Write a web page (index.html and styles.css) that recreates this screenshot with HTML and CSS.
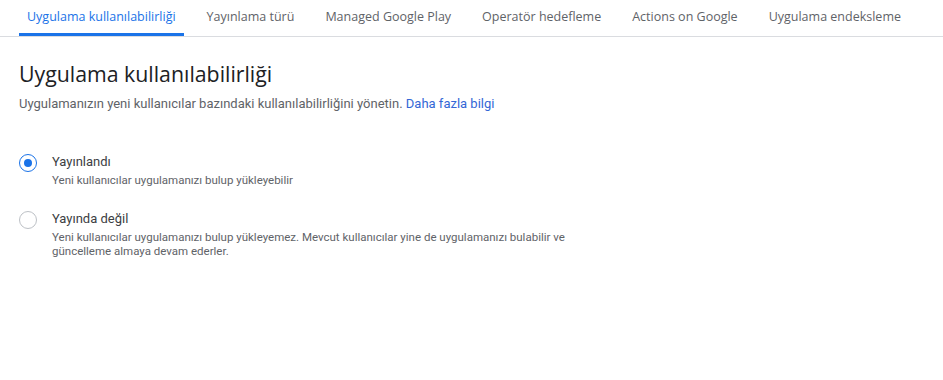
FILE: index.html
```html
<!DOCTYPE html>
<html lang="tr">

<head>
    <meta charset="UTF-8">
    <meta name="viewport" content="width=device-width, initial-scale=1.0">
    <title>Uygulama kullanılabilirliği</title>
    <link rel="stylesheet" href="styles.css">
</head>

<body>
    <nav class="tabs">
        <a href="#" class="tab active">Uygulama kullanılabilirliği</a>
        <a href="#" class="tab">Yayınlama türü</a>
        <a href="#" class="tab">Managed Google Play</a>
        <a href="#" class="tab">Operatör hedefleme</a>
        <a href="#" class="tab">Actions on Google</a>
        <a href="#" class="tab">Uygulama endeksleme</a>
    </nav>

    <section class="content">
        <h1>Uygulama kullanılabilirliği</h1>
        <p class="subtitle">
            Uygulamanızın yeni kullanıcılar bazındaki kullanılabilirliğini yönetin.
            <a href="#">Daha fazla bilgi</a>
        </p>

        <div class="options">
            <label class="option">
                <input type="radio" name="availability" checked>
                <span class="radio"></span>
                <span class="option-text">
                    <span class="option-title">Yayınlandı</span>
                    <span class="option-desc">Yeni kullanıcılar uygulamanızı bulup yükleyebilir</span>
                </span>
            </label>
            <label class="option">
                <input type="radio" name="availability">
                <span class="radio"></span>
                <span class="option-text">
                    <span class="option-title">Yayında değil</span>
                    <span class="option-desc">Yeni kullanıcılar uygulamanızı bulup yükleyemez. Mevcut kullanıcılar yine de uygulamanızı bulabilir ve güncelleme almaya devam ederler.</span>
                </span>
            </label>
        </div>
    </section>
</body>

</html>
```

FILE: styles.css
```css
body {
    font-family: Roboto, sans-serif;
    margin: 0;
    color: #202124;
    background: #fff;
}

.tabs {
    display: flex;
    gap: 15px;
    padding: 0 19px;
    border-bottom: 1px solid #dadce0;
}

.tab {
    font-family: "Open Sans", sans-serif;
    font-size: 12.5px;
    color: #5f6368;
    text-decoration: none;
    padding: 8px 8px 0;
    height: 25px;
    border-bottom: 3px solid transparent;
    border-radius: 3px 3px 0 0;
    white-space: nowrap;
}

.tab.active {
    color: #1a73e8;
    border-bottom-color: #1a73e8;
}

.content {
    padding: 0 19px;
}

h1 {
    font-family: "Open Sans", sans-serif;
    font-weight: 400;
    font-size: 21.3px;
    margin: 22px 0 8px;
}

.subtitle {
    font-size: 13px;
    color: #5f6368;
    margin: 0;
}

.subtitle a {
    color: #3367d6;
    text-decoration: none;
}

.options {
    margin-top: 42px;
    display: flex;
    flex-direction: column;
    gap: 23px;
}

.option {
    display: flex;
    align-items: flex-start;
    gap: 15px;
    cursor: pointer;
}

.option input {
    display: none;
}

.radio {
    width: 16px;
    height: 16px;
    margin-top: 1px;
    border: 1.5px solid #bdc1c6;
    border-radius: 50%;
    flex-shrink: 0;
    display: flex;
    align-items: center;
    justify-content: center;
}

.option input:checked + .radio {
    border-color: #1a73e8;
}

.option input:checked + .radio::after {
    content: "";
    width: 8px;
    height: 8px;
    border-radius: 50%;
    background: #1a73e8;
}

.option-text {
    display: flex;
    flex-direction: column;
    max-width: 520px;
}

.option-title {
    font-size: 13px;
    color: #3c4043;
    line-height: 18px;
}

.option-desc {
    font-size: 11.5px;
    color: #5f6368;
    line-height: 14px;
    margin-top: 2px;
}
```
